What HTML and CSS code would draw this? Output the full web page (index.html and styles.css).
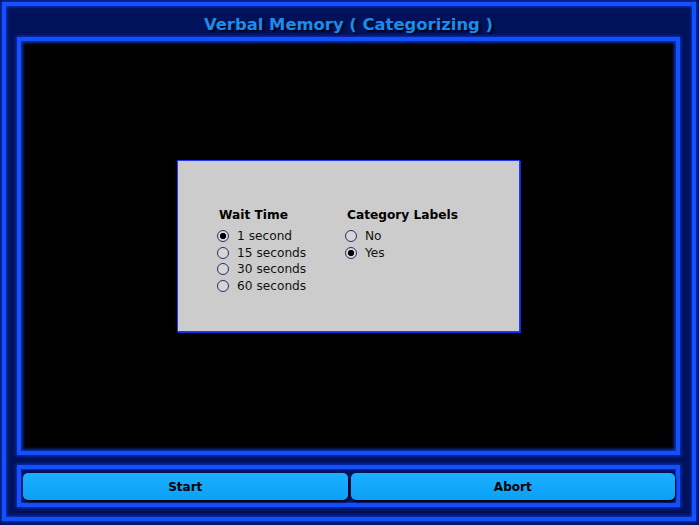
FILE: index.html
```html
<!DOCTYPE html>
<html lang="en">
<head>
<meta charset="utf-8">
<title>Verbal Memory ( Categorizing )</title>
<link rel="stylesheet" href="styles.css">
</head>
<body>
<div class="screen">
  <header class="title">Verbal Memory ( Categorizing )</header>
  <main class="stage">
    <form class="dialog">
      <div class="group group-wait">
        <div class="group-title">Wait Time</div>
        <label class="option"><input type="radio" name="wait" checked>1 second</label>
        <label class="option"><input type="radio" name="wait">15 seconds</label>
        <label class="option"><input type="radio" name="wait">30 seconds</label>
        <label class="option"><input type="radio" name="wait">60 seconds</label>
      </div>
      <div class="group">
        <div class="group-title">Category Labels</div>
        <label class="option"><input type="radio" name="labels">No</label>
        <label class="option"><input type="radio" name="labels" checked>Yes</label>
      </div>
    </form>
  </main>
  <footer class="controls">
    <button class="btn" type="button">Start</button>
    <button class="btn" type="button">Abort</button>
  </footer>
</div>
</body>
</html>
```

FILE: styles.css
```css
html, body {
  margin: 0;
  height: 100%;
}

body {
  background: #00125a;
  font-family: "DejaVu Sans", Verdana, sans-serif;
  overflow: hidden;
}

/* outer glowing frame */
.screen {
  box-sizing: border-box;
  margin: 2px 3px 0 2px;
  width: 694px;
  height: 519px;
  border: 4px solid #1450ff;
  box-shadow: 0 0 3px 1px #0a34c8, inset 0 0 3px 1px #0a34c8;
  padding: 0 12px 10px 11px;
  display: flex;
  flex-direction: column;
}

.title {
  height: 31px;
  box-sizing: border-box;
  padding-top: 6px;
  display: flex;
  align-items: center;
  justify-content: center;
  color: #1a8cf0;
  font-weight: bold;
  font-size: 16.4px;
  text-shadow: 2px 2px 2px #000414;
}

/* black work area */
.stage {
  box-sizing: border-box;
  height: 418px;
  border: 4px solid #1450ff;
  background: #000;
  box-shadow: 0 0 3px 1px #0a34c8, inset 0 0 3px 2px #0a30b8;
  display: flex;
  align-items: center;
  justify-content: center;
}

.dialog {
  box-sizing: border-box;
  width: 343px;
  height: 172px;
  margin: 0;
  background: #cccccc;
  border: 1px solid #2038ff;
  box-shadow: 1px 1px 0 #1028e0;
  padding: 46px 0 0 39px;
  display: flex;
}

.group {
  display: flex;
  flex-direction: column;
}

.group-wait {
  width: 128px;
}

.group-title {
  font-weight: bold;
  font-size: 12.2px;
  line-height: 16px;
  margin: 0 0 5px 2px;
  color: #000;
}

.option {
  display: flex;
  align-items: center;
  height: 16.6px;
  font-size: 12.2px;
  color: #111;
}

.option input {
  appearance: none;
  -webkit-appearance: none;
  box-sizing: border-box;
  width: 12px;
  height: 12px;
  margin: 0 8px 0 0;
  border: 1px solid #2c2c6c;
  border-radius: 50%;
  background: #d6d6d6;
}

.option input:checked {
  background: radial-gradient(circle, #000 0 2.8px, #d6d6d6 3.4px);
}

/* bottom button bar */
.controls {
  box-sizing: border-box;
  margin-top: 10px;
  height: 42px;
  border: 4px solid #1450ff;
  box-shadow: 0 0 3px 1px #0a34c8, inset 0 0 2px 1px #0a30b8;
  padding: 4px 1px 3px 2px;
  display: flex;
  gap: 3px;
}

.btn {
  flex: 1;
  border: 0;
  border-radius: 5px;
  background: linear-gradient(#1cb0ff, #0aa0f6);
  box-shadow: 1px 2px 2px #000008;
  font-family: "DejaVu Sans", Verdana, sans-serif;
  font-weight: bold;
  font-size: 12px;
  color: #000;
  padding: 0;
}
```
